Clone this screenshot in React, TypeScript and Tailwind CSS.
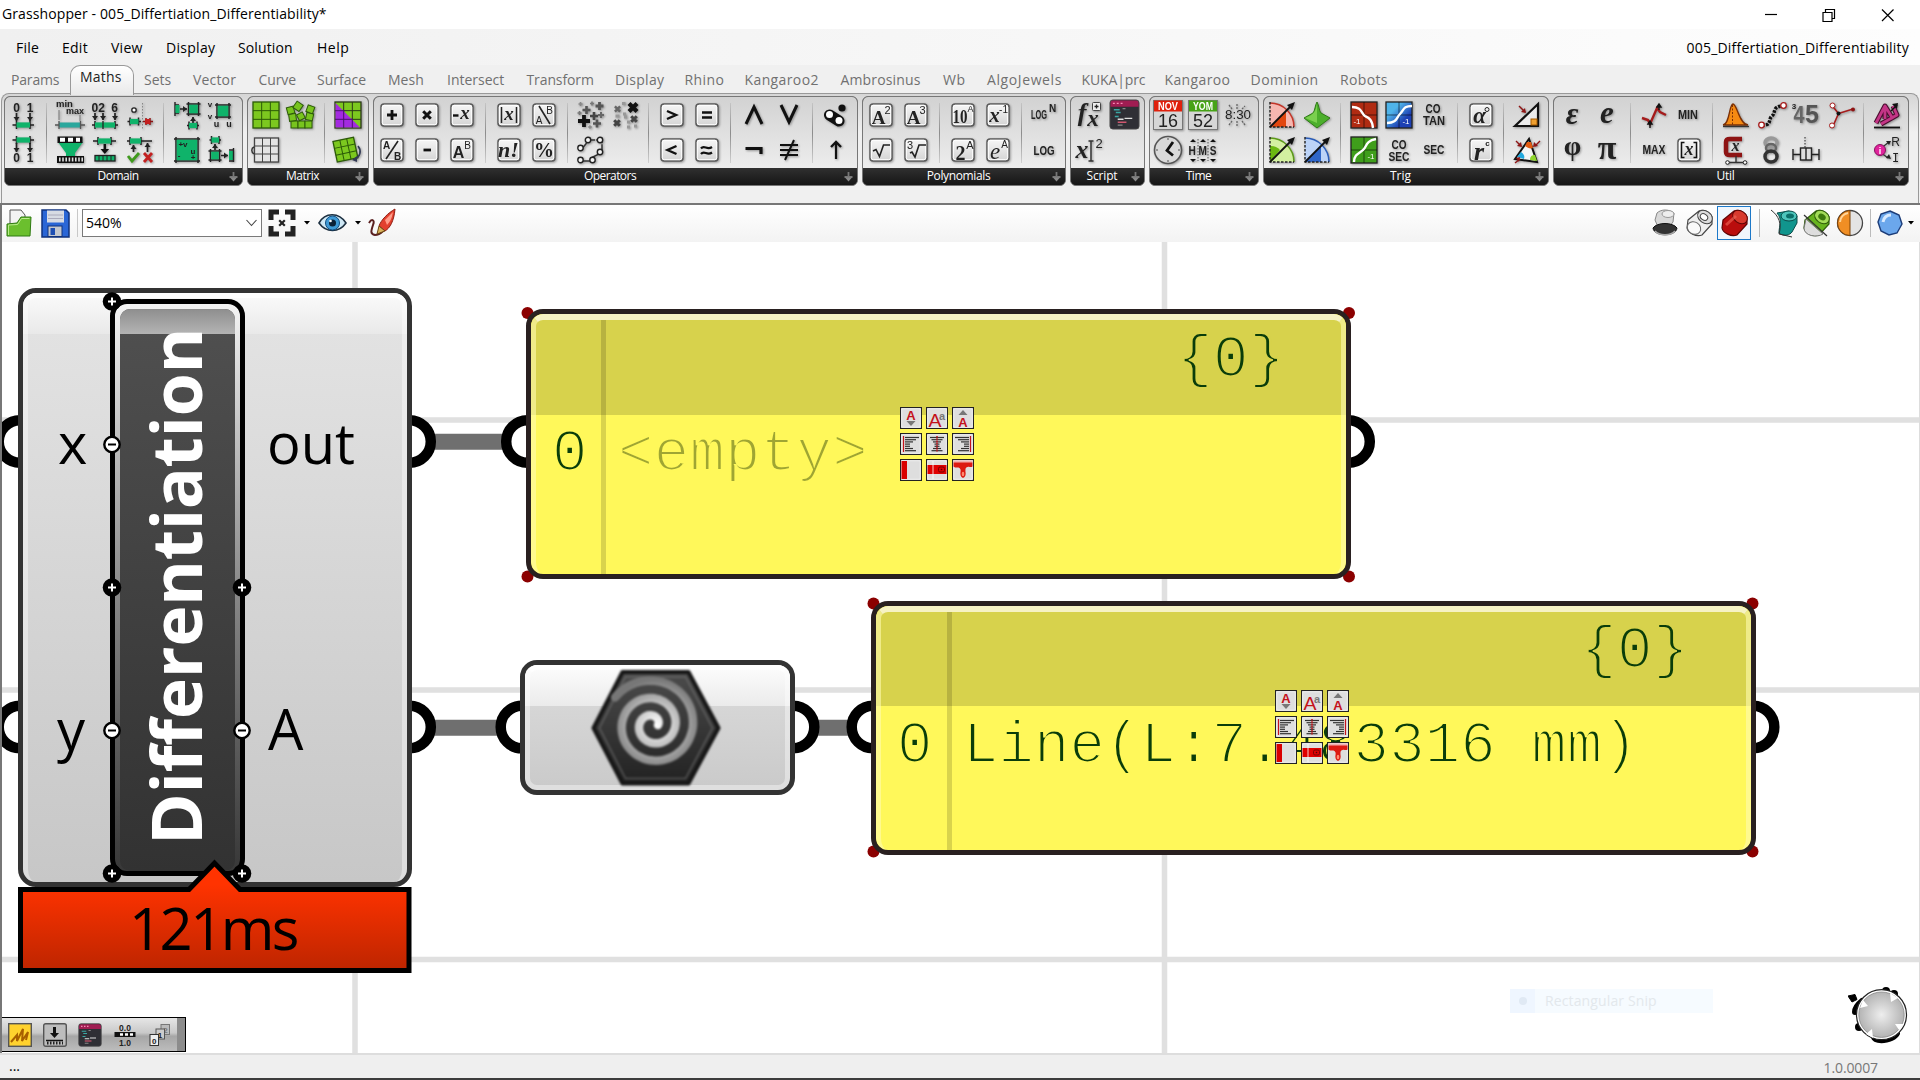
import React, { useLayoutEffect, useRef, useState } from "react";

/* Text spaced so that it takes exactly w pixels. */
function Fit({ w, className = "", children }: { w: number; className?: string; children: string }) {
  const ref = useRef<HTMLSpanElement>(null);
  const [ls, setLs] = useState(0);
  useLayoutEffect(() => {
    const el = ref.current;
    if (el) setLs((w - el.offsetWidth) / children.length);
  }, []);
  return (
    <span className={"inline-block whitespace-pre " + className}>
      <span ref={ref} style={{ letterSpacing: ls }}>
        {children}
      </span>
    </span>
  );
}

type P = { children?: React.ReactNode };
const G = "#0fb36a";
const SANS = "Liberation Sans";
const SERIF = "Liberation Serif";

const I = ({ children }: P) => (
  <svg viewBox="0 0 32 32" width="32" height="32" className="shrink-0 overflow-visible drop-shadow-[1px_1px_1px_rgba(0,0,0,0.35)]">
    {children}
  </svg>
);

const T = ({ x, y, s = 11, w = 700, f = SANS, i = false, c = "#222", a = "middle", l, children }: { x: number; y: number; s?: number; w?: number; f?: string; i?: boolean; c?: string; a?: "middle" | "start" | "end"; l?: number; children: string }) => (
  <text x={x} y={y} fontSize={s} fontWeight={w} fontFamily={f} fontStyle={i ? "italic" : "normal"} fill={c} textAnchor={a} textLength={l} lengthAdjust="spacingAndGlyphs">
    {children}
  </text>
);

const Key = ({ children }: P) => (
  <I>
    <rect x="5" y="5" width="22" height="22" rx="3" fill="url(#key)" stroke="#5a5a5a" strokeWidth="1.5" />
    <rect x="6.3" y="6.3" width="19.4" height="19.4" rx="2" fill="none" stroke="#fff" strokeWidth="1" />
    {children}
  </I>
);

const Arrow = ({ x, y1, y2 }: { x: number; y1: number; y2: number }) => {
  const d = y2 > y1 ? -1 : 1;
  return (
    <g>
      <path d={`M${x} ${y1}V${y2}`} stroke="#222" strokeWidth="1.7" />
      <path d={`M${x} ${y2}l-3 ${4 * d}h6z`} fill="#222" />
    </g>
  );
};

const Bar = ({ a, b, y, e = 4 }: { a: number; b: number; y: number; e?: number }) => (
  <g>
    <path d={`M${a - e} ${y}H${b + e}M${a} ${y - 4}v8M${b} ${y - 4}v8`} stroke="#222" strokeWidth="1.5" />
    <rect x={a} y={y - 2.6} width={b - a} height="5.2" fill={G} />
  </g>
);

const Grid3 = ({ x = 3, y = 3, s = 26, fill, line }: { x?: number; y?: number; s?: number; fill: string; line: string }) => (
  <g>
    <rect x={x} y={y} width={s} height={s} fill={fill} stroke={line} strokeWidth="1.3" />
    <path d={`M${x + s / 3} ${y}v${s}M${x + (2 * s) / 3} ${y}v${s}M${x} ${y + s / 3}h${s}M${x} ${y + (2 * s) / 3}h${s}`} stroke={line} strokeWidth="1" />
  </g>
);

const Plus = ({ x, y, r, w, c = "#222" }: { x: number; y: number; r: number; w: number; c?: string }) => (
  <path d={`M${x - r} ${y}h${2 * r}M${x} ${y - r}v${2 * r}`} stroke={c} strokeWidth={w} />
);
const Cross = ({ x, y, r, w, c = "#222" }: { x: number; y: number; r: number; w: number; c?: string }) => (
  <path d={`M${x - r} ${y - r}l${2 * r} ${2 * r}M${x + r} ${y - r}l${-2 * r} ${2 * r}`} stroke={c} strokeWidth={w} />
);

const Square = ({ x, y, s }: { x: number; y: number; s: number }) => (
  <g>
    <path d={`M${x - 2} ${y}h${s + 4}M${x - 2} ${y + s}h${s + 4}M${x} ${y - 2}v${s + 4}M${x + s} ${y - 2}v${s + 4}`} stroke="#222" strokeWidth="1.5" />
    <rect x={x + 0.7} y={y + 0.7} width={s - 1.4} height={s - 1.4} fill={G} />
  </g>
);

const domain: React.ReactNode[][][] = [
  [
    [
      <I><T x={9.5} y={12.5} s={12}>0</T><T x={23} y={12.5} s={12}>1</T><Arrow x={9.5} y1={14} y2={22} /><Arrow x={23} y1={14} y2={22} /><Bar a={9.5} b={23} y={26} /></I>,
      <I><Bar a={9.5} b={23} y={6} /><Arrow x={9.5} y1={9} y2={18} /><Arrow x={23} y1={9} y2={18} /><T x={9.5} y={28} s={12}>0</T><T x={23} y={28} s={12}>1</T></I>,
    ],
  ],
  [
    [
      <I><T x={2} y={8} s={9.5} a="start">min</T><T x={12} y={15} s={9} a="start">max</T><path d="M5 11v10M26 16v6" stroke="#777" /><rect x="5" y="23.5" width="22" height="5" fill="#2aa79c" /><path d="M1 26h4M27 26h4M5 22v8M26.5 22v8" stroke="#555" strokeWidth="1.3" /></I>,
      <I><path d="M4 8H29L21 19V23H12V19z" fill={G} /><rect x="3.5" y="2.5" width="25" height="6.5" fill="#111" /><path d="M6 5.8h5M14 5.8h5M22 5.8h4" stroke="#fff" strokeWidth="4" /><rect x="3" y="22" width="27" height="7" fill="#111" /><path d="M5 25.5h24" stroke="#ddd" strokeWidth="4" strokeDasharray="1.6 1.6" /></I>,
    ],
    [
      <I><T x={2.5} y={12.5} a="start" s={12}>02</T><T x={25.5} y={12.5} s={12}>6</T><Arrow x={6} y1={14} y2={21} /><Arrow x={14} y1={14} y2={21} /><Arrow x={26} y1={14} y2={21} /><Bar a={6} b={26} y={26} e={3} /><path d="M14 22v8" stroke="#222" strokeWidth="1.3" /></I>,
      <I><Bar a={9} b={22} y={7} e={5} /><path d="M15.8 10v7" stroke="#111" strokeWidth="2.5" /><path d="M11.5 15h8.6L15.8 20z" fill="#111" /><rect x="6" y="21.5" width="20" height="5.5" fill={G} stroke="#222" strokeWidth="1.3" /><path d="M10 22v5M14 22v5M18 22v5M22 22v5" stroke="#222" /></I>,
    ],
    [
      <I><circle cx="10" cy="11" r="2.2" fill="#fff" stroke="#222" strokeWidth="1.3" /><path d="M18.5 4v27" stroke="#888" strokeDasharray="1.5 1.5" /><Bar a={6} b={14.5} y={22.5} e={2.5} /><path d="M19 22.5h10M22 19v7M26 19v7" stroke="#8e1414" strokeWidth="1.5" /><rect x="21" y="20" width="5" height="5" fill="#c52020" /></I>,
      <I><Bar a={6} b={17} y={7} e={3} /><path d="M20 7h8" stroke="#222" strokeWidth="1.5" /><Arrow x={9.5} y1={18} y2={11} /><Arrow x={23.5} y1={18} y2={9} /><path d="M4 22l4 5 7-8" stroke="#3f9a1c" strokeWidth="2.8" fill="none" /><path d="M20 19l8 9M28 19l-8 9" stroke="#c32121" strokeWidth="2.8" /></I>,
    ],
  ],
  [
    [
      <I><path d="M4 3v14M4 6h4M4 14h4" stroke="#222" strokeWidth="1.4" /><rect x="4.5" y="6" width="4" height="8" fill={G} /><path d="M9 10h7" stroke="#222" strokeWidth="1.5" /><path d="M12 7l4 3-4 3z" fill="#222" /><Square x={17.5} y={5} s={10} /><Arrow x={22} y1={24} y2={18} /><Bar a={18} b={26} y={26.5} e={2} /></I>,
      <I><Square x={5} y={5} s={22} /><T x={12} y={13} s={8}>+v</T><T x={8} y={24} s={8}>-</T><T x={22} y={20} s={8}>u</T><T x={22} y={26} s={8}>+</T></I>,
    ],
    [
      <I><Square x={11} y={6} s={12} /><T x={4} y={8} s={8}>v</T><T x={4} y={20} s={8}>v</T><T x={10.5} y={28} s={9}>u</T><T x={23} y={28} s={9}>u</T></I>,
      <I><Bar a={5.5} b={13} y={6} e={2} /><Arrow x={9} y1={16} y2={10} /><Square x={4.5} y={17} s={9} /><path d="M15 21.5h7" stroke="#222" strokeWidth="1.5" /><path d="M18 18.5l4 3-4 3z" fill="#222" /><rect x="23" y="17" width="4" height="9" fill={G} /><path d="M27.5 14v14M23 16h5M23 27h5" stroke="#222" strokeWidth="1.4" /></I>,
    ],
  ],
];

const matrix: React.ReactNode[][][] = [
  [
    [
      <I><Grid3 fill="#7cc81f" line="#2c5a08" /></I>,
      <I><Grid3 x={4.5} y={4} s={24} fill="#e4e4e4" line="#444" /><path d="M4 13c-3 1-3 5 0 7" fill="none" stroke="#333" strokeWidth="1.4" /></I>,
    ],
    [
      <I><g fill="#78c41e" stroke="#2c5a08"><rect x="6" y="22" width="7" height="7" /><rect x="13" y="22" width="7" height="7" /><rect x="20" y="22" width="7" height="7" /><rect x="4" y="15" width="7" height="7" transform="rotate(-8 7 18)" /><rect x="2" y="8" width="7" height="7" transform="rotate(-15 5 11)" /><rect x="9.5" y="3.5" width="7.5" height="7.5" transform="rotate(35 13 7)" /><rect x="12.5" y="14" width="6.5" height="6.5" transform="rotate(-28 16 17)" /><rect x="21" y="14" width="7" height="7" transform="rotate(12 24 18)" /><rect x="22" y="7" width="7" height="7" transform="rotate(20 26 10)" /></g></I>,
      <I />,
    ],
  ],
  [
    [
      <I><Grid3 fill="#7cc81f" line="#2c3a18" /><path d="M3.5 4L28 28.5H3.5z" fill="#a32ae0" /><path d="M11.7 11v18M20.3 20v9M3 11.7h9M3 20.3h17" stroke="#4a1070" /></I>,
      <I><g transform="rotate(-12 14 16)"><Grid3 x={3} y={5} s={21} fill="#7cc81f" line="#2c5a08" /></g><path d="M26 12c4 5 2 11-3 13" stroke="#333a55" strokeWidth="1.6" fill="none" /><path d="M20 26l5-4v6z" fill="#333a55" /></I>,
    ],
  ],
];

const operators: React.ReactNode[][][] = [
  [
    [<Key><Plus x={16} y={16} r={5} w={2.8} c="#111" /></Key>, <Key><T x={10.5} y={15} s={10}>A</T><T x={21.5} y={25.5} s={10}>B</T><path d="M10 25L22 7" stroke="#222" strokeWidth="1.6" /></Key>],
    [<Key><Cross x={16} y={16} r={3.8} w={3} c="#111" /></Key>, <Key><path d="M12.5 16h7.5" stroke="#111" strokeWidth="2.8" /></Key>],
    [<Key><path d="M7 16.5h5.5" stroke="#111" strokeWidth="2.4" /><T x={19} y={20} s={19} f={SERIF} i>x</T></Key>, <Key><T x={12.5} y={24} s={16}>A</T><T x={21.5} y={15} s={10} w={400}>B</T></Key>],
  ],
  [
    [<Key><T x={16} y={20.5} s={19} f={SERIF} i>x</T><path d="M8.5 8v16M23.5 8v16" stroke="#222" strokeWidth="1.5" /></Key>, <Key><T x={15.5} y={23} s={22} f={SERIF} i>n!</T></Key>],
    [<Key><T x={11} y={25} s={10} w={400}>A</T><T x={21.5} y={15} s={10} w={400}>B</T><path d="M11 7L22 25" stroke="#222" strokeWidth="1.6" /></Key>, <Key><T x={16} y={22.5} s={20} f={SERIF}>%</T></Key>],
  ],
  [
    [
      <I><Plus x={9} y={22} r={6} w={3.8} c="#111" /><Plus x={22} y={24.5} r={4} w={2.6} c="#555" /><Plus x={11.5} y={11} r={4} w={2.6} c="#555" /><Plus x={24.5} y={7} r={4} w={2.8} c="#555" /><Plus x={19} y={17} r={4} w={2.6} c="#444" /><Plus x={5.5} y={5} r={2} w={1.6} c="#888" /><Plus x={4.5} y={14} r={2} w={1.6} c="#777" /><Plus x={17} y={4.5} r={2} w={1.6} c="#777" /><Plus x={26} y={16} r={3} w={2} c="#666" /><Plus x={15} y={28} r={1.8} w={1.4} c="#888" /></I>,
      <I><path d="M6 16L14 6L27 6V15L24 20L16 24M6 27H19" stroke="#333" strokeWidth="1.5" fill="none" strokeDasharray="9 1" /><g fill="#f4f4f4" stroke="#222" strokeWidth="1.4"><circle cx="5.5" cy="14" r="2.7" /><circle cx="13" cy="6" r="2.7" /><circle cx="25" cy="6" r="2.7" /><circle cx="25" cy="18" r="2.7" /><circle cx="5.5" cy="26" r="2.7" /><circle cx="17.5" cy="26" r="2.7" /></g></I>,
    ],
    [
      <I><Cross x={23} y={8.5} r={4} w={4.2} c="#111" /><Cross x={7} y={24} r={2.8} w={3} c="#444" /><Cross x={24} y={20} r={2.8} w={3} c="#444" /><Cross x={7.5} y={10} r={2.6} w={2.4} c="#666" /><path d="M12 4.5h3.500M13 15h3M5.5 17h4M17 23h3M17 28h3M24 27h3M14 18h3" stroke="#999" strokeWidth="3" /></I>,
      <I />,
    ],
  ],
  [
    [<Key><path d="M11 12l9 4-9 4" fill="none" stroke="#111" strokeWidth="2.4" /></Key>, <Key><path d="M20.5 12l-9 4 9 4" fill="none" stroke="#111" strokeWidth="2.4" /></Key>],
    [<Key><path d="M11 13.5h10M11 18.5h10" stroke="#111" strokeWidth="2.4" /></Key>, <Key><path d="M10 14.5c3-4 6 2 11-1.5M10 20c3-4 6 2 11-1.5" fill="none" stroke="#111" strokeWidth="2.2" /></Key>],
  ],
  [
    [<I><path d="M8 25L16 8l8 17" fill="none" stroke="#111" strokeWidth="3" /></I>, <I><path d="M7.5 14.5H23V20" fill="none" stroke="#111" strokeWidth="3.2" /></I>],
    [<I><path d="M8 6l8 17 8-17" fill="none" stroke="#111" strokeWidth="3" /></I>, <I><path d="M7 11h18M7 16h18M7 21h18M21 6l-9 20" fill="none" stroke="#111" strokeWidth="2" /></I>],
  ],
  [
    [<I><path d="M9.5 16L19 22" stroke="#111" strokeWidth="11" strokeLinecap="round" /><circle cx="9.5" cy="15.5" r="3.5" fill="#fff" /><circle cx="19" cy="21.5" r="3.5" fill="#fff" /><circle cx="22" cy="9" r="3.6" fill="#111" /></I>, <I><path d="M16 25V8" stroke="#111" strokeWidth="2.2" /><path d="M11 13l5-5 5 5" fill="none" stroke="#111" strokeWidth="2.4" /></I>],
  ],
];

const poly: React.ReactNode[][][] = [
  [
    [<Key><T x={13.5} y={25} s={19} f={SERIF}>A</T><T x={22.5} y={14.5} s={11} w={400}>2</T></Key>, <Key><path d="M8 17l3-1.5 3.500 7L18.500 11H25" fill="none" stroke="#222" strokeWidth="1.6" /></Key>],
    [<Key><T x={13.5} y={25} s={19} f={SERIF}>A</T><T x={22.5} y={14.5} s={11} w={400}>3</T></Key>, <Key><T x={10} y={15} s={11} w={400}>3</T><path d="M10 19l2-1 3 5 4-12H26" fill="none" stroke="#222" strokeWidth="1.6" /></Key>],
  ],
  [
    [<Key><T x={13} y={24} s={18} f={SERIF} l={15}>10</T><T x={23.5} y={12.5} s={9} w={400}>A</T></Key>, <Key><T x={13.5} y={25.5} s={20} f={SERIF}>2</T><T x={23} y={15} s={11} w={400}>A</T></Key>],
    [<Key><T x={12.5} y={22.5} s={21} f={SERIF} i>x</T><T x={21.5} y={14} s={10} w={400}>-1</T></Key>, <Key><T x={13} y={25} s={23} f={SERIF} i w={400}>e</T><T x={22.5} y={14} s={10} w={400}>A</T></Key>],
  ],
  [
    [<I><T x={2} y={20} s={12} a="start" l={16}>LOG</T><T x={23.5} y={13} s={10}>N</T></I>, <I><T x={15} y={20.5} s={12} l={21}>LOG</T></I>],
  ],
];

const Terminal = ({ s }: { s: number }) => (
  <svg viewBox="0 0 32 32" width={s} height={s} className="shrink-0">
    <rect x="1" y="1" width="30" height="30" rx="3" fill="#2f2f35" stroke="#4a4a4a" />
    <path d="M1.5 8V4a2.5 2.5 0 0 1 2.5-2.5h24A2.5 2.5 0 0 1 30.5 4v4z" fill="#a01d52" />
    <path d="M4 4.5h2M8 4.5h2M12 4.5h2" stroke="#f58ab4" strokeWidth="1.5" />
    <path d="M5 11h6M7 14h5M6 18h4" stroke="#3aa8a4" strokeWidth="1.5" />
    <path d="M9 21h6M16 20h8" stroke="#ddd" strokeWidth="1.5" />
    <path d="M9 24h9" stroke="#d0566f" strokeWidth="1.5" />
    <path d="M14 10h3M9 27h5" stroke="#888" strokeWidth="1.3" />
  </svg>
);

const script: React.ReactNode[][][] = [
  [
    [<I><T x={9} y={22} s={26} f={SERIF} i>f</T><T x={20} y={27} s={23} f={SERIF} i>x</T><rect x="19.5" y="3.5" width="8" height="8" rx="1" fill="#eee" stroke="#444" /><Plus x={23.5} y={7.5} r={2} w={1.3} /></I>, <I><T x={9} y={24} s={26} f={SERIF} i w={700}>x</T><path d="M18 7v20M15.5 7h5M15.5 27h5" stroke="#333" strokeWidth="1.5" /><T x={26} y={14} s={13} w={400}>2</T></I>],
    [<Terminal s={31} />, <I />],
  ],
];

const Cal = ({ t, n, c }: { t: string; n: string; c: string }) => (
  <I>
    <rect x="1.5" y="1.5" width="29" height="29" fill="#d6d6d6" stroke="#777" />
    <rect x="2" y="1.5" width="28" height="11" fill={c} />
    <T x={16} y={11} s={11} c="#fff" l={20}>{t}</T>
    <T x={16} y={27.5} s={18} w={400} l={20}>{n}</T>
  </I>
);

const time: React.ReactNode[][][] = [
  [
    [
      <Cal t="NOV" n="16" c="#e0200c" />,
      <I><circle cx="16" cy="16" r="13.5" fill="#d9d9d9" stroke="#555" strokeWidth="1.6" /><path d="M21 8l-6 8.500 6 5" fill="none" stroke="#111" strokeWidth="2.8" /><path d="M16 4v2M16 26v2M4 16h2M26 16h2" stroke="#555" /></I>,
    ],
    [
      <Cal t="YOM" n="52" c="#47a317" />,
      <I><T x={15.5} y={20.5} s={12} l={28}>H M S</T><path d="M11 5v22M21 5v22" stroke="#555" strokeDasharray="1.5 1.5" /><path d="M3 8l3-3 3 3zM13 8l3-3 3 3zM23 8l3-3 3 3zM3 25l3 3 3-3zM13 25l3 3 3-3zM23 25l3 3 3-3z" fill="#111" /></I>,
    ],
    [<I><T x={16} y={20} s={12} w={400} l={26}>8:30</T><path d="M15 10V5M10 10L7 6M20 10l3-3M15 22v5M10 22l-3 4M20 22l3 4" stroke="#666" strokeWidth="1.3" strokeDasharray="2 1" /></I>, <I />],
  ],
];

const Quad = ({ c1, c2, c3, flip }: { c1: string; c2: string; c3: string; flip?: boolean }) => (
  <I>
    <path d="M4 4A24 24 0 0 1 28 28H4z" fill={c1} />
    <path d={flip ? "M4 12a12 12 0 0 1 10 4L4 28z" : "M4 28L20 12V28z"} fill={c2} />
    <path d="M4 4A24 24 0 0 1 28 28" fill="none" stroke={c3} strokeWidth="1.5" />
    <path d="M4 3v25H28" fill="none" stroke="#222" strokeWidth="1.4" strokeDasharray="2.5 1.5" />
    <path d="M4 28L26 6" stroke="#111" strokeWidth="1.8" />
    <path d="M29 3l-3 8-5-5z" fill="#111" />
  </I>
);

const Graph = ({ c, d, tx, ty }: { c: string; d: string; tx: number; ty: number }) => (
  <I>
    <rect x="3" y="3" width="26" height="26" fill={c} stroke="#222" strokeWidth="1.3" />
    <path d="M16 3v26M3 16h26" stroke="rgba(0,0,0,0.55)" />
    <path d={d} fill="none" stroke="#fff" strokeWidth="2.4" />
    <T x={tx} y={ty} s={8} w={400} c="#fff">-1</T>
  </I>
);

const trig: React.ReactNode[][][] = [
  [
    [<Quad c1="#f6b7b0" c2="#e2460f" c3="#c43528" />, <Quad c1="#d3f0a0" c2="#6bb811" c3="#5c9a18" flip />],
    [
      <I><path d="M3 19L12 14C14 12 14 6 16 3c2 3 2 9 4 11l9 5-13 10z" fill="#4caf2c" stroke="#2f7a17" /><path d="M16 4c-1 9-4 12-12 15l12 5z" fill="#8ede5c" opacity=".7" /></I>,
      <Quad c1="#bcd3f7" c2="#2f66c8" c3="#2a5cb8" />,
    ],
  ],
  [
    [<Graph c="#b02b12" d="M4 8c10 0 9 6 13 9 4 2 7 3 8 12" tx={9} ty={25} />, <Graph c="#3f9e1b" d="M6 28c0-8 6-9 9-12 4-3 2-9 13-11" tx={23} ty={25} />],
    [<Graph c="url(#blu)" d="M4 24c10 0 9-5 13-9 4-4 3-8 12-8" tx={23} ty={25} />, <I><T x={16} y={15} s={12} l={15}>CO</T><T x={16} y={27} s={12} l={21}>SEC</T></I>],
    [<I><T x={15} y={14} s={12} l={15}>CO</T><T x={16} y={26} s={12} l={22}>TAN</T></I>, <I><T x={16} y={20} s={12} l={21}>SEC</T></I>],
  ],
  [
    [<Key><T x={14.5} y={24} s={23} f={SERIF} i>α</T><circle cx="22" cy="10.5" r="2" fill="none" stroke="#222" /></Key>, <Key><T x={14} y={26} s={26} f={SERIF} i>r</T><T x={22.5} y={12} s={8}>c</T></Key>],
  ],
  [
    [
      <I><path d="M4 27L27 5V27z" fill="#ececec" stroke="#111" strokeWidth="2.2" /><rect x="20" y="20" width="6" height="6" fill="#f0a030" stroke="#a85d00" /><path d="M8 7l6 6" stroke="#8e1414" strokeWidth="1.4" /><path d="M15 14l-5-1 4-4z" fill="#8e1414" /></I>,
      <I><path d="M4 25L18 5l8 23z" fill="#f4f4f4" stroke="#111" strokeWidth="2" /><path d="M16 8h4l2 6c-3 1-5 0-8-2z" fill="#e25a10" /><path d="M6 23l4-5c3 2 4 4 3 7z" fill="#22a8dd" /><path d="M19 26c0-4 2-5 5-5l2 6z" fill="#8fd52d" /><path d="M5 7l5 5M29 7l-5 5M4 29l5-4" stroke="#8e1414" strokeWidth="1.4" /><path d="M11 13l-5-1 4-4zM22 13l1-5 4 4zM9 23l-1 5-3-4z" fill="#8e1414" /></I>,
    ],
  ],
];

const util: React.ReactNode[][][] = [
  [
    [<I><T x={16} y={25} s={31} f={SERIF} i>ε</T></I>, <I><T x={16.5} y={21} s={28} f={SERIF} w={700}>φ</T></I>],
    [<I><T x={16} y={24} s={31} f={SERIF} i w={700}>e</T></I>, <I><T x={16} y={24.5} s={34} f={SERIF}>π</T></I>],
  ],
  [
    [<I><path d="M4 19l6 2 2 4 7-16 3 4 6 3" fill="none" stroke="#a51b1b" strokeWidth="2.4" /><path d="M12 29v-7M10 25l2-3 2 3zM21 5v6M19 8l2-3 2 3z" stroke="#111" strokeWidth="1.4" fill="#111" /></I>, <I><T x={16} y={20} s={12} l={23}>MAX</T></I>],
    [<I><T x={15} y={20} s={12} l={20}>MIN</T></I>, <Key><T x={16} y={20.5} s={18} f={SERIF} i>x</T><path d="M11.5 8.5H8.5v15h3M20.5 8.5h3v15h-3" fill="none" stroke="#111" strokeWidth="1.5" /></Key>],
  ],
  [
    [
      <I><path d="M3 26c7-1 6-21 10-21s6 20 15 21z" fill="#f58a12" stroke="#7a2f05" strokeWidth="1.3" /><path d="M12.5 6v20" stroke="#7a2f05" strokeDasharray="2 1.5" /><path d="M3 27.5h26" stroke="#333" strokeWidth="1.3" /></I>,
      <I><path d="M22 5H10c-3 0-4 1-4 3v10c0 2 1 3 4 3h12" fill="none" stroke="#8e1414" strokeWidth="4.5" /><T x={15.5} y={16.5} s={16} f={SERIF} i>x</T><path d="M16 22v6M8 28.5h16" stroke="#333" strokeWidth="1.4" /><circle cx="7.5" cy="28.5" r="1.8" fill="#fff" stroke="#222" /><circle cx="25" cy="28.5" r="1.8" fill="#fff" stroke="#222" /></I>,
    ],
    [
      <I><path d="M7 26c10 1 6-6 10-9s0-10 11-10" fill="none" stroke="#111" strokeWidth="3.5" strokeDasharray="2.6 1.2" /><circle cx="6.5" cy="26" r="2.8" fill="#fff" stroke="#a51b1b" strokeWidth="1.3" /><circle cx="28.5" cy="6.5" r="2.8" fill="#fff" stroke="#a51b1b" strokeWidth="1.3" /></I>,
      <I><ellipse cx="16" cy="8.5" rx="6" ry="4.5" fill="none" stroke="#999" strokeWidth="3.5" /><ellipse cx="16" cy="14" rx="5" ry="4" fill="none" stroke="#666" strokeWidth="2.5" /><ellipse cx="16" cy="22.5" rx="6" ry="5.5" fill="none" stroke="#333" strokeWidth="3.5" /></I>,
    ],
    [
      <I><T x={4} y={10} s={8}>3</T><T x={9} y={24} s={23} c="#666" l={11}>4</T><T x={22} y={24} s={25} c="#555">5</T></I>,
      <I><rect x="10.5" y="14" width="11" height="12" fill="#ddd" stroke="#222" strokeWidth="1.4" /><path d="M3 15v11M29 15v11M3 20.5h7M22 20.5h7M16 14v12" stroke="#222" strokeWidth="1.4" /><path d="M15 3v11" stroke="#222" strokeDasharray="1.5 1.5" /></I>,
    ],
    [
      <I><path d="M7.5 7l6 7.5L8.5 26M13.5 14.5L28 10" fill="none" stroke="#a51b1b" strokeWidth="1.6" /><circle cx="7.5" cy="6.5" r="2.5" fill="#fff" stroke="#a51b1b" /><circle cx="7" cy="26.5" r="2.5" fill="#fff" stroke="#a51b1b" /><circle cx="13.5" cy="14.5" r="2" fill="#111" /><circle cx="28" cy="10.5" r="2" fill="#8e1414" /></I>,
      <I />,
    ],
  ],
  [
    [
      <I><path d="M3 28.5h26" stroke="#111" strokeWidth="1.8" /><g fill="none" strokeLinejoin="round"><path d="M5 24L14 7v13M14 7l8 13M22 7l4 9-16 9" stroke="#4a0d2e" strokeWidth="5" /><path d="M5 24L14 7v13M14 7l8 13M22 7l4 9-16 9" stroke="#c43586" strokeWidth="2.8" /></g><path d="M20 12l6-6" stroke="#111" strokeWidth="1.4" /><path d="M27 4l-1 6-5-5z" fill="#111" /></I>,
      <I><path d="M9 15L18 8M9 18l8 6" stroke="#333" strokeWidth="1.3" /><path d="M20 7l-5 0 3 4zM20 25l-2-5-3 4z" fill="#222" /><circle cx="9" cy="16" r="5.5" fill="#e0249c" stroke="#8a1060" /><T x={9} y={19.5} s={9} c="#fff">i</T><T x={24.5} y={12} s={12} w={400}>R</T><T x={24.5} y={28} s={12} w={400} f="Liberation Mono">I</T></I>,
    ],
  ],
];

function Panel({ title, tw, w, groups }: { title: string; tw: number; w: string; groups: React.ReactNode[][][] }) {
  return (
    <div className={"flex h-[90px] shrink-0 flex-col overflow-hidden rounded-md border border-[#777] bg-[#1f1f1f] " + w}>
      <div className="flex h-[71px] bg-gradient-to-b from-[#d2d2d2] to-[#ededed] pl-[0.5px]">
        {groups.map((g, i) => (
          <React.Fragment key={i}>
            {i > 0 && <div className="mx-[5.4px] mt-1.5 h-[60px] w-px shrink-0 bg-gradient-to-b from-[#c4c4c4] via-[#8c8c8c] to-[#d0d0d0]" />}
            {g.map((col, j) => (
              <div key={j} className="flex w-[35px] shrink-0 flex-col">
                {col.map((ic, k) => (
                  <div key={k} className="flex h-[35.5px] items-center justify-center">
                    {ic}
                  </div>
                ))}
              </div>
            ))}
          </React.Fragment>
        ))}
      </div>
      <div className="flex flex-1 items-center bg-gradient-to-b from-[#303030] to-[#161616] pr-1">
        <div className="-mt-0.5 flex flex-1 justify-center pl-0.5 text-xs leading-[15px] text-white">
          <Fit w={tw}>{title}</Fit>
        </div>
        <svg width="9" height="10" viewBox="0 0 9 10">
          <path d="M4.5 0v8M0.5 5h8" stroke="#777" strokeWidth="1.8" />
          <path d="M1 5.5h7L4.5 9.5z" fill="#888" />
        </svg>
      </div>
    </div>
  );
}

const tabs: [string, number, number][] = [
  ["Sets", 49, 27], ["Vector", 65.5, 43], ["Curve", 58.5, 37.5], ["Surface", 71, 49], ["Mesh", 59, 36], ["Intersect", 79.5, 57], ["Transform", 88.5, 67], ["Display", 69.5, 49], ["Rhino", 60, 40], ["Kangaroo2", 96, 74.5], ["Ambrosinus", 102.5, 80.5], ["Wb", 44, 23], ["AlgoJewels", 94.5, 75], ["KUKA|prc", 83, 64], ["Kangaroo", 86, 66], ["Dominion", 89.5, 68], ["Robots", 60, 48],
];

/* Handle glyphs at the inputs and outputs of the script component. */
const Zui = ({ x, y, plus }: { x: number; y: number; plus?: boolean }) => (
  <g>
    <circle cx={x} cy={y} r={plus ? 9.3 : 7.7} fill={plus ? "#000" : "#fff"} stroke="#000" strokeWidth={plus ? 0 : 2.4} />
    <path d={plus ? `M${x - 4} ${y}h8M${x} ${y - 4}v8` : `M${x - 4} ${y}h8`} stroke={plus ? "#fff" : "#000"} strokeWidth="2" />
  </g>
);

const Cell = ({ children }: P) => (
  <svg width="22" height="22" viewBox="0 0 22 22" className="block">
    <rect x=".6" y=".6" width="20.8" height="20.8" fill="#dedede" stroke="#222" strokeWidth="1.2" />
    <rect x="1.7" y="1.7" width="18.6" height="18.6" fill="none" stroke="#f4f4f4" />
    {children}
  </svg>
);
const red = "#c4121a";
const lines = (al: "l" | "c" | "r") =>
  [14, 11, 8, 5, 5, 8, 11].map((w, i) => {
    const x = al === "l" ? 5 : al === "r" ? 17 - w : 11 - w / 2;
    return <path key={i} d={`M${x} ${4.5 + i * 2.2}h${w}`} stroke="#333" strokeWidth="1.2" />;
  });

const PanelTools = ({ className }: { className: string }) => (
  <div className={"absolute grid grid-cols-3 gap-1 " + className}>
    <Cell><T x={11} y={12.5} s={13} w={700} c={red}>A</T><path d="M6.5 14h9l-4.5 5z" fill="#777" /></Cell>
    <Cell><T x={9} y={19.5} s={19} w={400} c={red} l={13}>A</T><T x={16} y={13} s={11} c="#777">a</T></Cell>
    <Cell><T x={11} y={19.5} s={13} w={700} c={red}>A</T><path d="M6.5 8h9L11 3z" fill="#777" /></Cell>
    <Cell>{lines("l")}<path d="M3.5 3v16" stroke={red} strokeWidth="1.2" /></Cell>
    <Cell>{lines("c")}<path d="M11 3v16" stroke={red} strokeWidth="1.5" strokeDasharray="1.5 .7" /></Cell>
    <Cell>{lines("r")}<path d="M18.5 3v16" stroke={red} strokeWidth="1.2" /></Cell>
    <Cell><rect x="1.5" y="2" width="5.5" height="18" fill="#d90000" /></Cell>
    <Cell><rect x="1.5" y="6" width="19" height="9" fill="#e00000" /><path d="M7 2v18" stroke="#fff" strokeWidth=".8" /><rect x="12.500" y="8" width="6" height="5" rx="1.500" fill="none" stroke="#700" /><circle cx="15.500" cy="10.500" r=".8" fill="#500" /></Cell>
    <Cell><rect x="1.5" y="1.5" width="19" height="2.5" fill="#f0b0b0" /><path d="M1.5 3.5h19v4c-2 1.500-3-.5-5 .5-2.500.5-2 3-2 5 .5 2.500 0 5-2.500 6-2.500-1-3-3.500-2.500-6 .5-2 0-4-2-4.500-2-.5-3 1-5-1z" fill="#dd1a12" /><ellipse cx="11" cy="15" rx="1.3" ry="2.3" fill="#ff8a70" /></Cell>
  </div>
);

const DataPanel = ({ box, header, x0 }: { box: string; header: string; x0: string }) => (
  <div className={"absolute overflow-hidden rounded-[17px] border-[5px] border-[#292020] bg-[#fff85a] " + box}>
    <div className={"bg-[#d7d24c] " + header} />
    <div className={"absolute top-0 bottom-0 w-[5px] bg-black/15 " + x0} />
    <div className="absolute inset-0 rounded-[12px] border-x-[5px] border-t-[6px] border-x-[#fffbb0]/60 border-t-[#f6f2c4]" />
  </div>
);

const spiral = (() => {
  const out: string[] = [];
  for (let i = 0; i <= 170; i++) {
    const t = (i / 170) * Math.PI * 2 * 2.4;
    const r = 5 + (t / (Math.PI * 2)) * 17.5;
    out.push(`${i ? "L" : "M"}${(653 + r * Math.cos(t)).toFixed(1)} ${(725 - r * Math.sin(t)).toFixed(1)}`);
  }
  return out.join("");
})();

const Down = () => (
  <svg width="6" height="4" viewBox="0 0 6 4"><path d="M0 0h6L3 3.5z" fill="#000" /></svg>
);

const Cyl = ({ a, b, line }: { a: string; b: string; line: string }) => (
  <g>
    <path d="M3 12L14 3c4-2 11 1 13 6v7l-10 11C11 29 3 25 2 20z" fill={a} stroke={line} strokeWidth="1.2" />
    <ellipse cx="20" cy="9" rx="8" ry="6" transform="rotate(35 20 9)" fill={b} stroke={line} />
  </g>
);

export default function App() {
  return (
    <div className="flex h-[1080px] w-[1920px] flex-col overflow-hidden bg-[#f0f0f0] font-['Open_Sans',sans-serif] text-sm text-black">
      <svg width="0" height="0" className="absolute">
        <defs>
          <linearGradient id="key" x1="0" y1="0" x2="0" y2="1"><stop offset="0" stopColor="#f7f7f7" /><stop offset="1" stopColor="#d4d4d4" /></linearGradient>
          <linearGradient id="blu" x1="0" y1="0" x2="1" y2="1"><stop offset="0.3" stopColor="#4fb4ea" /><stop offset=".7" stopColor="#1d40b4" /></linearGradient>
          <linearGradient id="hot" x1="0" y1="0" x2="0" y2="1"><stop offset=".2" stopColor="#ff3300" /><stop offset="1" stopColor="#bd2500" /></linearGradient>
          <radialGradient id="dial"><stop offset="0" stopColor="#eee" /><stop offset="1" stopColor="#b4b4b4" /></radialGradient>
          <radialGradient id="spi" gradientUnits="userSpaceOnUse" cx="656" cy="725" r="46"><stop offset="0" stopColor="#fff" /><stop offset=".45" stopColor="#c4c4c4" /><stop offset="1" stopColor="#777" /></radialGradient>
          <linearGradient id="hex" x1="0" y1="0" x2="0" y2="1"><stop offset="0" stopColor="#4c4c4c" /><stop offset="1" stopColor="#222" /></linearGradient>
        </defs>
      </svg>

      {/* Title bar */}
      <div className="flex h-[29px] shrink-0 items-center justify-between bg-white pl-0.5 pr-[26px]">
        <Fit w={325} className="pb-px">Grasshopper - 005_Differtiation_Differentiability*</Fit>
        <svg width="130" height="14" viewBox="0 0 130 14" fill="none" stroke="#000" strokeWidth="1.2">
          <path d="M1 6.5h12" />
          <path d="M59 4.5h9v9h-9zM61.5 4.5v-3h9v9H68" />
          <path d="M118 1.500l11.500 11.500M129.500 1.500L118 13" />
        </svg>
      </div>

      {/* Menu */}
      <div className="flex h-9 shrink-0 items-center bg-gradient-to-r from-[#f0f0f0] to-[#fdfdfd] pl-4 pt-0.5">
        <Fit w={23} className="w-[46px]">File</Fit>
        <Fit w={26} className="w-[49px]">Edit</Fit>
        <Fit w={32} className="w-[55px]">View</Fit>
        <Fit w={49} className="w-[72px]">Display</Fit>
        <Fit w={55} className="w-[79px]">Solution</Fit>
        <Fit w={32} className="flex-1">Help</Fit>
        <Fit w={222} className="mr-[11px]">005_Differtiation_Differentiability</Fit>
      </div>

      {/* Tabs */}
      <div className="flex h-[29px] shrink-0 items-start pl-[11px] pt-[3px] text-[#707070]">
        <Fit w={48} className="w-[59px] pt-0.5">Params</Fit>
        <div className="z-10 -mt-[3px] h-[30px] w-[64px] rounded-t-[10px] border border-b-0 border-[#999] bg-gradient-to-b from-white to-[#e9e9e9] pl-[9px] pt-px text-[#222]">
          <Fit w={42}>Maths</Fit>
        </div>
        <div className="flex pl-[10px] pt-0.5">
          {tabs.map(([t, p, w]) => (
            <div key={t} className="shrink-0 overflow-visible" style={{ width: p }}>
              <Fit w={w}>{t}</Fit>
            </div>
          ))}
        </div>
      </div>

      {/* Ribbon */}
      <div className="-mt-px mr-px ml-px flex h-[110px] shrink-0 gap-1 rounded-t-lg border border-b-0 border-[#999] bg-gradient-to-b from-[#d6d6d6] to-[#f0f0f0] to-35% pl-0.5 pt-0.5">
        <Panel title="Domain" tw={41} w="w-[239px]" groups={domain} />
        <Panel title="Matrix" tw={33} w="w-[122px]" groups={matrix} />
        <Panel title="Operators" tw={52} w="w-[485px]" groups={operators} />
        <Panel title="Polynomials" tw={64} w="w-[204px]" groups={poly} />
        <Panel title="Script" tw={31} w="w-[75px]" groups={script} />
        <Panel title="Time" tw={26} w="w-[110px]" groups={time} />
        <Panel title="Trig" tw={21} w="w-[286px]" groups={trig} />
        <Panel title="Util" tw={18} w="w-[356px]" groups={util} />
      </div>

      <div className="flex h-[850px] shrink-0 flex-col border-l-2 border-t-2 border-t-[#777] border-l-[#777]">
        {/* Canvas toolbar */}
        <div className="flex h-[37px] shrink-0 items-center bg-gradient-to-b from-white to-[#f3f3f3] pb-0.5 pl-[3px]">
          <svg width="28" height="30" viewBox="0 0 28 30"><path d="M5 2h11l4 5v12H5z" fill="#f3f3f3" stroke="#555" /><path d="M2 28V16l10-1 4-6h10l-1 19z" fill="#6bbf2e" stroke="#2f7a12" /><path d="M3.5 27V17l9-.5 4-6h8" fill="none" stroke="#b9ec8c" /></svg>
          <svg width="30" height="30" viewBox="0 0 30 30" className="ml-[7px]"><path d="M2 2h24l3 3v24H2z" fill="#2a66d6" stroke="#10327c" strokeWidth="1.5" /><rect x="7" y="2.5" width="17" height="12" fill="#d7dbe3" /><path d="M8 7h15M8 10.5h15" stroke="#aab" /><rect x="8" y="18" width="14" height="10.5" fill="#c3c7ce" stroke="#10327c" /><rect x="10.5" y="20" width="4.5" height="7" fill="#1d4eb3" /></svg>
          <div className="ml-[7px] h-7 w-px bg-[#c8c8c8]" />
          <div className="ml-1 flex h-7 w-[180px] items-center justify-between border border-[#7a7a7a] bg-white pl-[3px] pr-1">
            <Fit w={36}>540%</Fit>
            <svg width="11" height="8" viewBox="0 0 11 8"><path d="M.5 1l5 5.5 5-5.5" fill="none" stroke="#444" strokeWidth="1.1" /></svg>
          </div>
          <svg width="28" height="28" viewBox="0 0 28 28" className="ml-1.5"><path d="M11 3H3v8M17 3h8v8M3 17v8h8M25 17v8h-8" fill="none" stroke="#222" strokeWidth="5" /><Cross x={14} y={14} r={2.8} w={2.2} /></svg>
          <div className="ml-[8px]"><Down /></div>
          <svg width="29" height="24" viewBox="0 0 29 24" className="ml-[8px]"><path d="M1 12C7 1 21 1 28 12 21 22 8 22 1 12z" fill="#cfe8f5" stroke="#1c2f40" strokeWidth="1.6" /><circle cx="14.5" cy="12" r="7" fill="#3f9ad6" stroke="#0f4d80" /><circle cx="14.5" cy="12" r="3.5" fill="#0c2238" /><circle cx="12.5" cy="10" r="1.3" fill="#fff" /></svg>
          <div className="ml-[8px]"><Down /></div>
          <svg width="29" height="30" viewBox="0 0 29 30" className="ml-[7px]"><path d="M1 15c3-5 6-3 4 2-2 6-3 9 2 10 4 0 6-2 8-4" fill="none" stroke="#5a2020" strokeWidth="2" /><path d="M27 1C20 5 13 12 11 18l6 5c5-3 9-10 10-22z" fill="#e2402e" stroke="#8e1d12" /><path d="M11 18l-2 8 8-3z" fill="#d9b25c" stroke="#6b4310" /><path d="M17 12l8-8c-1 6-3 10-6 13z" fill="#ff9d8a" /></svg>
          <div className="flex-1" />
          <svg width="26" height="30" viewBox="0 0 26 30"><path d="M3 12l2-7c4-4 12-4 17 0l-1 9-4 5H6z" fill="#d9d9d9" stroke="#888" /><ellipse cx="16" cy="6" rx="6" ry="3.500" fill="#eee" stroke="#999" /><path d="M1 20c4-6 20-6 24 0-1 9-23 9-24 0z" fill="#333" stroke="#111" /><path d="M3 23c4 5 16 5 20 0" stroke="#aaa" fill="none" strokeWidth="1.500" /></svg>
          <svg width="29" height="30" viewBox="0 0 29 30" className="ml-[7px]"><Cyl a="#efefef" b="#ddd" line="#444" /><ellipse cx="9" cy="20" rx="7" ry="6" transform="rotate(35 9 20)" fill="#fafafa" stroke="#666" /><ellipse cx="19" cy="9" rx="4" ry="3" transform="rotate(35 19 9)" fill="#fff" stroke="#444" /></svg>
          <div className="ml-[3px] flex h-[34px] w-[34px] items-center justify-center border border-[#1c78c8] bg-[#f0f6fc]">
            <svg width="29" height="30" viewBox="0 0 29 30"><Cyl a="#b90d0d" b="#d83a2e" line="#5e0505" /><path d="M6 17L16 8" stroke="#f26a5a" strokeWidth="3" opacity=".6" /></svg>
          </div>
          <div className="ml-2 h-7 w-px bg-[#bbb]" />
          <svg width="30" height="30" viewBox="0 0 30 30" className="ml-[9px]"><path d="M8 5c6 7 2 12 2 20 5 4 11 2 13-1l5-9V8l-8-5z" fill="#11958d" stroke="#0a4c49" /><ellipse cx="20" cy="8" rx="8" ry="5" fill="#4cc4bb" stroke="#0a4c49" /><ellipse cx="21" cy="8" rx="4" ry="2.500" fill="#0a6f69" /><path d="M2 2c8 6 11 14 8 24l13 3" stroke="#333" fill="none" /></svg>
          <svg width="30" height="30" viewBox="0 0 30 30" className="ml-[3px]"><Cyl a="#67b41e" b="#a3dc58" line="#2f5c0a" /><ellipse cx="20" cy="9" rx="4" ry="3" transform="rotate(35 20 9)" fill="#3d7a0c" /><path d="M4 11l17 15c-6 4-19 2-19-6z" fill="#ddd" stroke="#777" /><path d="M2 7l23 21" stroke="#333" strokeWidth="1.2" /></svg>
          <svg width="28" height="28" viewBox="0 0 28 28" className="ml-[4px]"><circle cx="14" cy="14" r="12.5" fill="#e4e4e4" stroke="#444" strokeWidth="1.3" /><path d="M14 1.5a12.5 12.5 0 0 0 0 25z" fill="#f08e24" stroke="#7a4208" /><path d="M12 4a10 10 0 0 0-8 9" stroke="#ffd59a" strokeWidth="2" fill="none" /></svg>
          <div className="ml-[6px] h-7 w-px bg-[#bbb]" />
          <svg width="26" height="26" viewBox="0 0 26 26" className="ml-1.5"><path d="M13 1l9 4 3 9-5 9-8 2-8-4-3-9 3-8z" fill="#6ba7ec" stroke="#1c3c78" strokeWidth="1.4" /><path d="M6 12c1-5 4-7 8-7" stroke="#d8eaff" strokeWidth="3" fill="none" /></svg>
          <div className="mr-[6px] ml-[5px]"><Down /></div>
        </div>

        {/* Canvas: free placement, in window coordinates */}
        <div className="relative h-[811px] shrink-0 overflow-hidden border-r border-r-[#ddd] bg-white">
          <div className="absolute -top-[242px] -left-[2px] h-[1080px] w-[1920px]">
            <svg width="1920" height="1080" viewBox="0 0 1920 1080" className="absolute inset-0">
              <path d="M355 242V1053M1164.5 242V1053M0 420H1920M0 690H1920M0 959.5H1920" stroke="#e0e0e0" strokeWidth="5.5" />
              <path d="M430 441.7H505M430 727.8H500M815 727.8H850" stroke="#6f6f6f" strokeWidth="16" />
              <g fill="#fff" stroke="#000" strokeWidth="10.5">
                {[[20, 441.5], [20, 727], [409.5, 441.5], [409.5, 727], [527.5, 441.5], [1348.5, 441.5], [522, 727], [793, 727], [873, 727], [1753, 727]].map(([x, y]) => (
                  <circle key={x + "-" + y} cx={x} cy={y} r="21.3" />
                ))}
              </g>
              <g fill="#8b0000">
                {[[527.5, 313], [1349, 313], [527.5, 576.5], [1349, 576.5], [873.5, 603.5], [1752.5, 603.5], [873.5, 851.5], [1752.5, 851.5]].map(([x, y]) => (
                  <circle key={x + "-" + y} cx={x} cy={y} r="6" />
                ))}
              </g>
            </svg>

            {/* Script component */}
            <div className="absolute top-[288px] left-[18px] h-[599px] w-[394px] overflow-hidden rounded-[18px] border-[5px] border-[#333] bg-gradient-to-b from-[#e4e4e4] to-[#c7c7c7]">
              <div className="h-[41px] bg-gradient-to-b from-[#fbfbfb] to-[#e9e9e9]" />
              <div className="absolute inset-0 rounded-[13px] border-x-[5px] border-t-[5px] border-x-white/40 border-t-white/80" />
            </div>
            <div className="absolute top-[299px] left-[110px] h-[577px] w-[135px] overflow-hidden rounded-[17px] border-[5px] border-black bg-gradient-to-b from-[#f4f4f4] via-[#8a8a8a] to-[#383838]">
              <div className="mx-[5px] mt-[5px] h-[562px] overflow-hidden rounded-[10px] bg-gradient-to-b from-[#505050] to-[#323232]">
                <div className="h-[25px] bg-gradient-to-b from-[#8e8e8e] to-[#b4b4b4]" />
              </div>
            </div>
            <div className="absolute top-[845px] left-[140px] origin-top-left -rotate-90 text-[70px] leading-none font-bold text-white">
              <Fit w={517}>Differentiation</Fit>
            </div>
            <Fit w={27} className="absolute top-[414px] left-[58px] text-[56px] leading-none">x</Fit>
            <Fit w={28} className="absolute top-[700px] left-[57px] text-[56px] leading-none">y</Fit>
            <Fit w={88} className="absolute top-[414px] left-[267px] text-[56px] leading-none">out</Fit>
            <Fit w={36} className="absolute top-[700px] left-[268px] text-[56px] leading-none">A</Fit>

            <svg width="440" height="740" viewBox="0 250 440 740" className="absolute top-[250px] left-0">
              <Zui x={112} y={301.5} plus /><Zui x={112} y={587.5} plus /><Zui x={242} y={587.5} plus />
              <Zui x={112} y={873.5} plus /><Zui x={242} y={873.5} plus />
              <Zui x={112} y={444.5} /><Zui x={112} y={730.5} /><Zui x={242} y={730.5} />
              <path d="M20.5 889.5H189L214.5 863L240 889.5H409V970.5H20.5z" fill="url(#hot)" stroke="#000" strokeWidth="5" />
            </svg>
            <Fit w={168} className="absolute top-[899px] left-[129px] text-[58px] leading-none">121ms</Fit>

            {/* Geometry parameter */}
            <div className="absolute top-[660px] left-[520px] h-[135px] w-[275px] overflow-hidden rounded-[17px] border-[5px] border-[#333] bg-gradient-to-b from-[#dcdcdc] to-[#cacaca]">
              <div className="h-[41px] bg-gradient-to-b from-[#fdfdfd] to-[#ebebeb]" />
              <div className="absolute inset-0 rounded-[12px] border-[5px] border-white/40 border-t-white/80" />
            </div>
            <svg width="140" height="130" viewBox="586 663 140 130" className="absolute top-[663px] left-[586px] blur-[1.2px]">
              <path d="M622.5 672H688.5L718.5 728L688.5 783.5H622.5L593.5 728z" fill="url(#hex)" stroke="#161616" strokeWidth="4" strokeLinejoin="round" />
              <path d="M625.5 677H685.5L712.5 728L685.5 778.5H625.5L599.5 728z" fill="none" stroke="#777" strokeWidth="1.5" opacity=".6" />
              <path d={spiral} fill="none" stroke="url(#spi)" strokeWidth="8.5" strokeLinecap="round" />
            </svg>

            {/* Output panels */}
            <DataPanel box="top-[309px] left-[525.5px] h-[270px] w-[825.5px]" header="h-[101px]" x0="left-[70px]" />
            <DataPanel box="top-[601px] left-[871px] h-[254px] w-[885px]" header="h-[100px]" x0="left-[70.5px]" />
            <div className="font-['Liberation_Mono',monospace] text-[59px] leading-none text-[#0a3d0a] [-webkit-text-stroke:2.2px_#fff85a]">
              <Fit w={108} className="absolute top-[331px] left-[1177px] [-webkit-text-stroke:2.2px_#d7d24c]">{"{0}"}</Fit>
              <Fit w={35} className="absolute top-[425px] left-[552px]">0</Fit>
              <Fit w={250} className="absolute top-[425px] left-[618px] text-[#9fa533]">{"<empty>"}</Fit>
              <Fit w={108} className="absolute top-[622px] left-[1581px] [-webkit-text-stroke:2.2px_#d7d24c]">{"{0}"}</Fit>
              <Fit w={35} className="absolute top-[717px] left-[897px]">0</Fit>
              <Fit w={675} className="absolute top-[717px] left-[963px]">Line(L:7.483316 mm)</Fit>
            </div>
            <PanelTools className="top-[407px] left-[900px]" />
            <PanelTools className="top-[690px] left-[1275px]" />

            {/* Fading menu entry */}
            <div className="absolute top-[989px] left-[1510px] flex h-6 w-[203px] items-center bg-[#f6fbff] text-[#e3e8ec]">
              <div className="flex h-6 w-[25px] items-center justify-center bg-[#eff6ff]"><div className="h-2 w-2 rounded-full bg-[#e0e9f4]" /></div>
              <Fit w={112} className="pl-2.5">Rectangular Snip</Fit>
            </div>

            {/* Compass */}
            <svg width="64" height="64" viewBox="1848 983 64 64" className="absolute top-[983px] left-[1848px]">
              <path d="M1848 996l7-1.500 2 5-5 2.500z" fill="#000" stroke="#000" />
              <path d="M1862 1001c-5 4-7 8-7 11" fill="none" stroke="#000" strokeWidth="6" strokeLinecap="round" />
              <circle cx="1886" cy="991" r="4" /><circle cx="1894" cy="994" r="4" /><circle cx="1859" cy="1027" r="4" />
              <path d="M1871 1037c1 10 25 7 29-3v-5l-27 9z" fill="#000" />
              <circle cx="1881.5" cy="1014.7" r="25" fill="#fff" stroke="#222" strokeWidth="1.2" />
              <circle cx="1881.5" cy="1014.7" r="22.7" fill="url(#dial)" stroke="#888" strokeWidth=".8" />
              <path d="M1863 1000l5 6-8 2zM1890 993l8 5-7 4zM1895 1024l9 0-5 6zM1872 1029l1 9-7-4z" fill="#fff" />
            </svg>

            {/* Markov palette */}
            <div className="absolute top-[1017px] left-[2px] flex h-[35px] w-[184px] items-center border border-l-0 border-black bg-[linear-gradient(#e6e6e6,#c9c9c9_45%,#a6a6a6_55%,#bdbdbd)] pl-[6px]">
              <svg width="24" height="24" viewBox="0 0 24 24"><rect x=".7" y=".7" width="22.6" height="22.6" fill="#ffd22e" stroke="#555" strokeWidth="1.4" /><path d="M3 19l6-7v6l6-12-1 12 6-9-2 8" fill="none" stroke="#a85f00" strokeWidth="2" /></svg>
              <svg width="24" height="24" viewBox="0 0 24 24" className="ml-[11px]"><rect x=".7" y=".7" width="22.6" height="22.6" rx="2" fill="#bdbdbd" stroke="#555" strokeWidth="1.4" /><path d="M11.5 4v7" stroke="#111" strokeWidth="3" /><path d="M7 10h9l-4.5 5z" fill="#111" /><path d="M3 17.5h17" stroke="#111" strokeWidth="1.5" /><path d="M4 20h16" stroke="#222" strokeWidth="3" strokeDasharray="1.5 1.5" /></svg>
              <div className="ml-[11px]"><Terminal s={24} /></div>
              <svg width="24" height="24" viewBox="0 0 24 24" className="ml-[11px]"><T x={12} y={7.5} s={8.5}>0.0</T><T x={12} y={23} s={8.5}>1.0</T><rect x="1.5" y="9" width="21" height="5" fill="#111" /><path d="M7 11.5h3M12 11.5h3M17 11.5h3" stroke="#fff" strokeWidth="2.5" /></svg>
              <svg width="24" height="24" viewBox="0 0 24 24" className="ml-[11px]"><rect x="13" y="1.5" width="8.5" height="10" fill="#bbb" stroke="#777" /><T x={17.5} y={10} s={8} c="#777">2</T><rect x="8" y="6" width="8.5" height="10" fill="#ccc" stroke="#555" /><T x={12} y={14.5} s={8}>1</T><rect x="2" y="11.5" width="8.5" height="11" fill="#eee" stroke="#333" /><T x={6.3} y={20.5} s={8}>0</T></svg>
              <div className="ml-auto h-full w-2 bg-[#8c8c8c]" />
            </div>
          </div>
        </div>
      </div>

      {/* Status bar */}
      <div className="flex h-[25px] shrink-0 items-center justify-between border-t-2 border-t-[#ddd] bg-[#efefef] pr-[42px] pb-px pl-[9px]">
        <span className="text-sm leading-none">...</span>
        <Fit w={54} className="pt-[3px] text-[#777]">1.0.0007</Fit>
      </div>
      <div className="h-[2px] shrink-0 bg-[#3c3c3c]" />
    </div>
  );
}
